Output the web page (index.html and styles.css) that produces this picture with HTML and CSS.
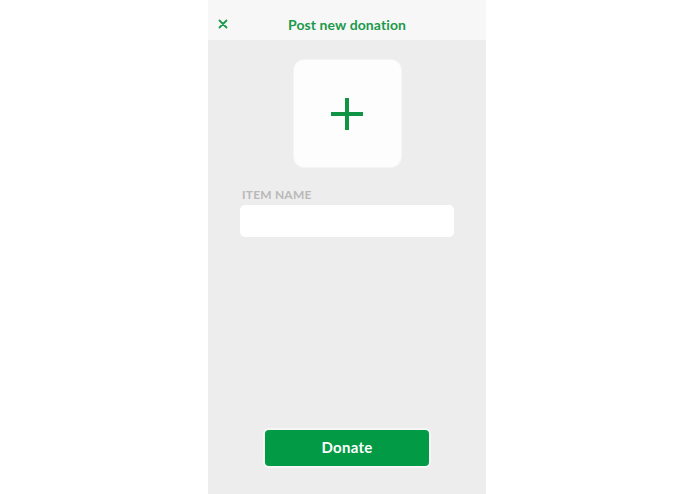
FILE: index.html
```html
<!DOCTYPE html>
<html>
<head>
<meta charset="utf-8">
<link rel="stylesheet" href="styles.css">
</head>
<body>
<div class="phone">
  <header class="topbar">
    <span class="close">
      <svg width="10" height="10" viewBox="0 0 10 10"><path d="M1.5 1.5L8.5 8.5M8.5 1.5L1.5 8.5" stroke="#1b9a4b" stroke-width="1.8" stroke-linecap="round"/></svg>
    </span>
    <h1 class="title">Post new donation</h1>
  </header>
  <main class="content">
    <div class="photo">
      <svg width="32" height="32" viewBox="0 0 32 32"><path d="M16 0V32M0 16H32" stroke="#0f9444" stroke-width="4"/></svg>
    </div>
    <div class="field">
      <label class="label">ITEM NAME</label>
      <div class="input"></div>
    </div>
    <div class="spacer"></div>
    <div class="btnwrap"><button class="donate">Donate</button></div>
  </main>
</div>
</body>
</html>
```
FILE: styles.css
```css
html, body { margin: 0; padding: 0; background: #ffffff; }
body { font-family: Lato, "Liberation Sans", sans-serif; }
.phone {
  width: 278px;
  height: 494px;
  margin-left: 208px;
  background: #ededed;
  display: flex;
  flex-direction: column;
}
.topbar {
  height: 40px;
  background: #f7f7f7;
  display: flex;
  align-items: center;
  justify-content: center;
  position: relative;
}
.close {
  position: absolute;
  left: 10px;
  top: 19px;
  width: 10px;
  height: 10px;
  display: flex;
}
.title {
  margin: 0;
  padding-top: 8px;
  font-size: 14px;
  font-weight: 700;
  color: #1b9a4b;
  letter-spacing: 0.1px;
}
.content {
  flex: 1;
  display: flex;
  flex-direction: column;
  align-items: center;
}
.photo {
  margin-top: 19px;
  width: 107px;
  height: 107px;
  background: #fdfdfd;
  border: 1px solid #f5f5f5;
  border-radius: 11px;
  display: flex;
  align-items: center;
  justify-content: center;
}
.field {
  margin-top: 20px;
  width: 214px;
  display: flex;
  flex-direction: column;
}
.label {
  font-size: 12px;
  font-weight: 700;
  color: #b9b9b9;
  padding-left: 2px;
  line-height: 14px;
  margin-bottom: 3px;
  letter-spacing: 0.2px;
}
.input {
  height: 32px;
  background: #ffffff;
  border-radius: 5px;
}
.spacer { flex: 1; }
.btnwrap {
  padding: 2px;
  background: #f6f6f6;
  border-radius: 6px;
  margin-bottom: 26px;
}
.donate {
  display: block;
  width: 164px;
  height: 36px;
  border: none;
  border-radius: 4px;
  background: #029a45;
  color: #ffffff;
  font-family: Lato, "Liberation Sans", sans-serif;
  font-size: 15px;
  font-weight: 700;
  padding: 0 0 3px;
  letter-spacing: 0.3px;
}
```
